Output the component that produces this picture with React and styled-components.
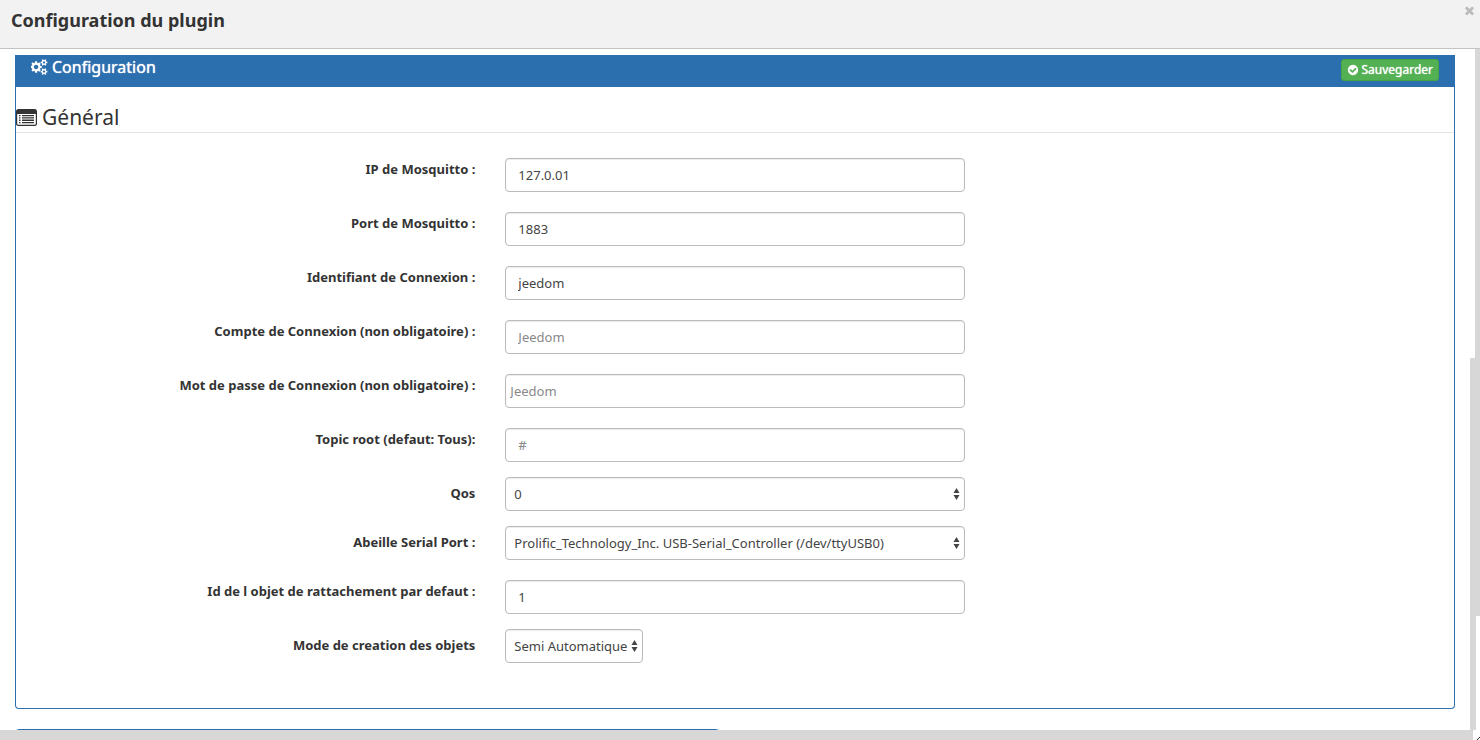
import React from "react";
import styled, { createGlobalStyle } from "styled-components";

const GlobalStyle = createGlobalStyle`
  * {
    box-sizing: border-box;
  }

  body {
    margin: 0;
    background: #fff;
    color: #333;
    font-family: "Noto Sans", "Open Sans", sans-serif;
    font-size: 13px;
    line-height: 18px;
  }
`;

const Dialog = styled.div`
  display: flex;
  flex-direction: column;
  height: 100vh;
  overflow: hidden;
`;

const TitleBar = styled.header`
  display: flex;
  flex: none;
  align-items: flex-start;
  justify-content: space-between;
  height: 49px;
  padding: 4px 4px 0 11px;
  border-bottom: 1px solid #c4c4c4;
  background: #f2f2f2;
`;

const Title = styled.h1`
  margin: 0;
  font-size: 18px;
  font-weight: 700;
  line-height: 32px;
`;

const CloseButton = styled.button`
  display: flex;
  padding: 0;
  border: 0;
  background: none;
  color: #bbb;
  cursor: pointer;
`;

const Viewport = styled.div`
  display: flex;
  flex: 1;
  min-height: 0;
`;

const Content = styled.main`
  flex: 1;
  padding: 6px 15px 0;
  overflow: hidden;
`;

const Panel = styled.section`
  margin-bottom: 20px;
  border: 1px solid #2b6fae;
  border-radius: 4px;
`;

const ConfigPanel = styled(Panel)`
  padding-bottom: 30px;
  border-top: 0;
  border-top-left-radius: 0;
  border-top-right-radius: 0;
`;

const PanelHeading = styled.div`
  display: flex;
  align-items: flex-start;
  justify-content: space-between;
  height: 32px;
  padding: 0 15px;
  background: #2b6fae;
  color: #fff;
`;

const PanelTitle = styled.h2`
  display: flex;
  align-items: center;
  gap: 4px;
  margin: 0;
  font-size: 16px;
  font-weight: 400;
  line-height: 24px;
  text-shadow: 0 0 1px #fff;
`;

const SaveButton = styled.button`
  display: flex;
  align-items: center;
  gap: 2px;
  height: 22px;
  margin-top: 4px;
  padding: 0 5px;
  border: 1px solid #44a344;
  border-radius: 3px;
  background: #53b053;
  color: #fff;
  font: 400 12px/18px "Noto Sans", "Open Sans", sans-serif;
  text-shadow: 0 0 1px #fff;
  cursor: pointer;
`;

const Form = styled.form`
  padding-top: 15px;
`;

const Legend = styled.h3`
  display: flex;
  align-items: center;
  gap: 5px;
  margin: 0 0 20px;
  border-bottom: 1px solid #e2e2e2;
  font-size: 21px;
  font-weight: 400;
  line-height: 30px;
`;

const Row = styled.div`
  display: grid;
  grid-template-columns: repeat(3, 1fr);
  margin: 0 -15px 15px;
`;

const Label = styled.label`
  padding: 7px 15px 0;
  font-weight: 700;
  text-align: right;
`;

const Cell = styled.div`
  padding: ${(p) => (p.$offset ? "5px 15px 0" : "0 15px")};
`;

const Input = styled.input`
  display: block;
  width: 100%;
  height: 34px;
  padding: 0 ${(p) => (p.$tight ? "4px" : "12px")};
  border: 1px solid #bbb;
  border-radius: 4px;
  background: #fff;
  box-shadow: inset 0 1px 1px rgba(0, 0, 0, 0.08);
  color: #444;
  font: inherit;

  &::placeholder {
    color: #888;
    opacity: 1;
  }
`;

const SelectWrapper = styled.div`
  display: ${(p) => (p.$compact ? "inline-grid" : "grid")};
  align-items: center;
  vertical-align: top;

  & > * {
    grid-area: 1 / 1;
  }

  svg {
    justify-self: end;
    margin-right: 5px;
    pointer-events: none;
  }
`;

const Select = styled.select`
  width: 100%;
  height: 34px;
  padding: 0 14px 0 8px;
  border: 1px solid #bbb;
  border-radius: 4px;
  appearance: none;
  background: #fff;
  box-shadow: inset 0 1px 1px rgba(0, 0, 0, 0.08);
  color: #444;
  font: inherit;
`;

const Columns = styled.div`
  display: grid;
  grid-template-columns: 1fr 1fr;
  gap: 30px;
`;

const LowerPanel = styled(Panel)`
  height: 120px;
`;

const ScrollRail = styled.div`
  display: flex;
  flex: none;
  flex-direction: column;
  width: 10px;
`;

const RailPart = styled.div`
  flex: ${(p) => p.$grow};
  align-self: ${(p) => p.$align || "flex-start"};
  width: ${(p) => p.$width}px;
  background: #d7d7d7;
`;

const BottomRail = styled.footer`
  display: flex;
  flex: none;
  justify-content: flex-end;
  height: 10px;
  background: #d7d7d7;
`;

const Corner = styled.div`
  display: flex;
  align-items: flex-end;
  justify-content: flex-end;
  width: 7px;
  background: #fff;
`;

const CogsIcon = () => (
  <svg width="17" height="16" viewBox="0 0 1920 1792" fill="currentColor" aria-hidden="true">
    <path d="M832 896q0-106-75-181t-181-75-181 75-75 181 75 181 181 75 181-75 75-181zm768 512q0-52-38-90t-90-38-90 38-38 90q0 53 37.5 90.5t90.5 37.5 90.5-37.5 37.5-90.5zm0-1024q0-52-38-90t-90-38-90 38-38 90q0 53 37.5 90.5t90.5 37.5 90.5-37.5 37.5-90.5zm-384 421v185q0 10-7 19.5t-16 10.5l-155 24q-11 35-32 76 34 48 90 115 7 11 7 20 0 12-7 19-23 30-82.5 89.5t-78.5 59.5q-11 0-21-7l-115-90q-37 19-77 31-11 108-23 155-7 24-30 24h-186q-11 0-20-7.5t-10-17.5l-23-153q-34-10-75-31l-118 89q-7 7-20 7-11 0-21-8-144-133-144-160 0-9 7-19 10-14 41-53t47-61q-23-44-35-82l-152-24q-10-1-17-9.5t-7-19.5v-185q0-10 7-19.5t16-10.5l155-24q11-35 32-76-34-48-90-115-7-11-7-20 0-12 7-20 22-30 82-89t79-59q11 0 21 7l115 90q34-18 77-32 11-108 23-154 7-24 30-24h186q11 0 20 7.5t10 17.5l23 153q34 10 75 31l118-89q8-7 20-7 11 0 21 8 144 133 144 160 0 8-7 19-12 16-42 54t-45 60q23 48 34 82l152 23q10 2 17 10.5t7 19.5zm640 533v140q0 16-149 31-12 27-30 52 51 113 51 138 0 4-4 7-122 71-124 71-8 0-46-47t-52-68q-20 2-30 2t-30-2q-14 21-52 68t-46 47q-2 0-124-71-4-3-4-7 0-25 51-138-18-25-30-52-149-15-149-31v-140q0-16 149-31 13-29 30-52-51-113-51-138 0-4 4-7 4-2 35-20t59-34 30-16q8 0 46 46.5t52 67.5q20-2 30-2t30 2q51-71 92-112l6-2q4 0 124 70 4 3 4 7 0 25-51 138 17 23 30 52 149 15 149 31zm0-1024v140q0 16-149 31-12 27-30 52 51 113 51 138 0 4-4 7-122 71-124 71-8 0-46-47t-52-68q-20 2-30 2t-30-2q-14 21-52 68t-46 47q-2 0-124-71-4-3-4-7 0-25 51-138-18-25-30-52-149-15-149-31v-140q0-16 149-31 13-29 30-52-51-113-51-138 0-4 4-7 4-2 35-20t59-34 30-16q8 0 46 46.5t52 67.5q20-2 30-2t30 2q51-71 92-112l6-2q4 0 124 70 4 3 4 7 0 25-51 138 17 23 30 52 149 15 149 31z" />
  </svg>
);

const CheckIcon = () => (
  <svg width="12" height="12" viewBox="0 0 1792 1792" fill="currentColor" aria-hidden="true">
    <path d="M1412 734q0-28-18-46l-91-90q-19-19-45-19t-45 19l-408 407-226-226q-19-19-45-19t-45 19l-91 90q-18 18-18 46 0 27 18 45l362 362q19 19 45 19 27 0 46-19l543-543q18-18 18-45zm252 162q0 209-103 385.5t-279.5 279.5-385.5 103-385.5-103-279.5-279.5-103-385.5 103-385.5 279.5-279.5 385.5-103 385.5 103 279.5 279.5 103 385.5z" />
  </svg>
);

const CloseIcon = () => (
  <svg width="13" height="13" viewBox="0 0 1792 1792" fill="currentColor" aria-hidden="true">
    <path d="M1490 1322q0 40-28 68l-136 136q-28 28-68 28t-68-28l-294-294-294 294q-28 28-68 28t-68-28l-136-136q-28-28-28-68t28-68l294-294-294-294q-28-28-28-68t28-68l136-136q28-28 68-28t68 28l294 294 294-294q28-28 68-28t68 28l136 136q28 28 28 68t-28 68l-294 294 294 294q28 28 28 68z" />
  </svg>
);

const ListIcon = () => (
  <svg width="21" height="17" viewBox="0 0 21 17" fill="currentColor" aria-hidden="true">
    <path
      fillRule="evenodd"
      d="M2.5 0h16A2.5 2.5 0 0 1 21 2.5v12a2.5 2.5 0 0 1-2.5 2.5h-16A2.5 2.5 0 0 1 0 14.5v-12A2.5 2.5 0 0 1 2.5 0zM1.200 5v9.500a1.300 1.300 0 0 0 1.300 1.300h16a1.300 1.300 0 0 0 1.300-1.300V5z"
    />
    <path d="M3 6h1.500v1.300H3zM3 8.300h1.500v1.300H3zM3 10.600h1.500v1.300H3zM3 12.900h1.500v1.300H3zM6 6h12v1.300H6zM6 8.300h12v1.300H6zM6 10.600h12v1.300H6zM6 12.900h12v1.300H6z" />
  </svg>
);

const ArrowsIcon = () => (
  <svg width="7" height="12" viewBox="0 0 7 12" fill="#444" aria-hidden="true">
    <path d="M3.5 0l3 5h-6zM3.500 12l3-5h-6z" />
  </svg>
);

const ResizeIcon = () => (
  <svg width="3" height="3" viewBox="0 0 3 3" fill="#222" aria-hidden="true">
    <path d="M0 3V2h1V1h1V0h1v1H2v1H1v1z" />
  </svg>
);

const FIELDS = [
  { id: "ip", label: "IP de Mosquitto :", value: "127.0.01" },
  { id: "port", label: "Port de Mosquitto :", value: "1883" },
  { id: "clientId", label: "Identifiant de Connexion :", value: "jeedom" },
  {
    id: "user",
    label: "Compte de Connexion (non obligatoire) :",
    placeholder: "Jeedom",
  },
  {
    id: "password",
    label: "Mot de passe de Connexion (non obligatoire) :",
    placeholder: "Jeedom",
    type: "password",
  },
  { id: "topic", label: "Topic root (defaut: Tous):", placeholder: "#" },
  { id: "qos", label: "Qos", options: ["0", "1", "2"] },
  {
    id: "serialPort",
    label: "Abeille Serial Port :",
    options: ["Prolific_Technology_Inc. USB-Serial_Controller (/dev/ttyUSB0)"],
  },
  {
    id: "parentId",
    label: "Id de l objet de rattachement par defaut :",
    value: "1",
  },
  {
    id: "mode",
    label: "Mode de creation des objets",
    options: ["Semi Automatique", "Automatique", "Manuel"],
    compact: true,
  },
];

const Field = ({ id, label, value, placeholder, type, options, compact }) => (
  <Row>
    <Label htmlFor={id}>{label}</Label>
    <Cell $offset={!options}>
      {options ? (
        <SelectWrapper $compact={compact}>
          <Select id={id}>
            {options.map((o) => (
              <option key={o}>{o}</option>
            ))}
          </Select>
          <ArrowsIcon />
        </SelectWrapper>
      ) : (
        <Input
          id={id}
          type={type || "text"}
          defaultValue={value}
          placeholder={placeholder}
          $tight={type === "password"}
        />
      )}
    </Cell>
  </Row>
);

export default () => {
  return (
    <Dialog>
      <GlobalStyle />
      <TitleBar>
        <Title>Configuration du plugin</Title>
        <CloseButton type="button" aria-label="Fermer">
          <CloseIcon />
        </CloseButton>
      </TitleBar>
      <Viewport>
        <Content>
          <ConfigPanel>
            <PanelHeading>
              <PanelTitle>
                <CogsIcon />
                Configuration
              </PanelTitle>
              <SaveButton type="submit" form="config">
                <CheckIcon />
                Sauvegarder
              </SaveButton>
            </PanelHeading>
            <Form id="config" onSubmit={(e) => e.preventDefault()}>
              <Legend>
                <ListIcon />
                Général
              </Legend>
              {FIELDS.map((f) => (
                <Field key={f.id} {...f} />
              ))}
            </Form>
          </ConfigPanel>
          <Columns>
            <LowerPanel />
          </Columns>
        </Content>
        <ScrollRail>
          <RailPart $grow={309} $width={5} $align="flex-end" />
          <RailPart $grow={258} $width={10} />
          <RailPart $grow={114} $width={6} />
        </ScrollRail>
      </Viewport>
      <BottomRail>
        <Corner>
          <ResizeIcon />
        </Corner>
      </BottomRail>
    </Dialog>
  );
};
